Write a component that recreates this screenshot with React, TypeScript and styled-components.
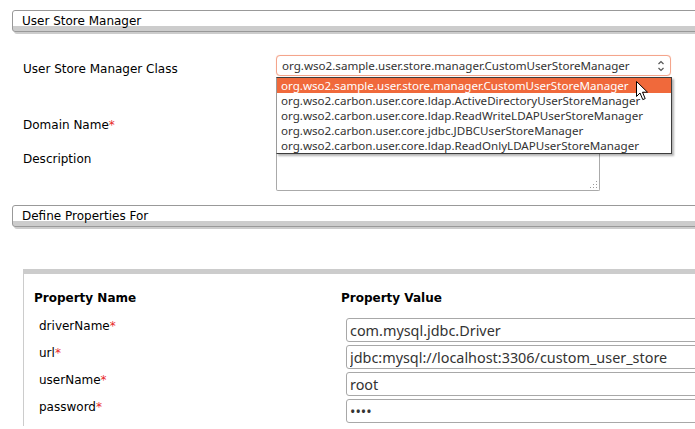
import React from "react";
import styled, { createGlobalStyle } from "styled-components";

const GlobalStyle = createGlobalStyle`
    html, body {
        margin: 0;
        padding: 0;
        background: #fff;
        overflow: hidden;
    }
    body {
        font-family: "DejaVu Sans", Verdana, sans-serif;
        font-size: 12px;
        color: #000;
    }
`;

const Page = styled.div`
    width: 695px;
    height: 429px;
    overflow: hidden;
    box-sizing: border-box;
    padding: 10px 0 0 12px;
`;

const SectionTitle = styled.h2<{ $top?: number }>`
    margin: ${(p) => p.$top || 0}px -20px 0 0;
    height: 22px;
    box-sizing: border-box;
    border: 1px solid #999;
    border-radius: 3px;
    background: linear-gradient(to bottom, #fff 0, #fff 15px, #ccc 15px, #ccc 100%);
    box-shadow: 2px 2px 0 #ccc;
    padding-left: 9px;
    font-size: 12px;
    font-weight: normal;
    line-height: 20px;
`;

const FormGrid = styled.div`
    margin-top: 23px;
    padding-left: 11px;
    display: flex;
    flex-direction: column;
`;

const FieldRow = styled.div<{ $gap?: number; $alignTop?: boolean }>`
    display: grid;
    grid-template-columns: 253px 1fr;
    align-items: ${(p) => (p.$alignTop ? "start" : "center")};
    margin-top: ${(p) => p.$gap || 0}px;
`;

const Label = styled.div<{ $pad?: number }>`
    line-height: 15px;
    padding-top: ${(p) => p.$pad || 0}px;
`;

const Req = styled.span`
    color: #e8282a;
`;

const SelectWrap = styled.div`
    position: relative;
    width: 395px;
`;

const SelectBox = styled.div`
    height: 21px;
    box-sizing: border-box;
    border: 1px solid #f4a58c;
    border-radius: 4px;
    box-shadow: 0 0 1px #f9c9b8;
    background: #fff;
    display: flex;
    align-items: center;
    justify-content: space-between;
    padding: 0 5px 0 5px;
    font-family: "Noto Sans", "DejaVu Sans", sans-serif;
    font-size: 11.6px;
    color: #333;
`;

const Popup = styled.ul`
    position: absolute;
    top: 22px;
    left: 0;
    width: 396px;
    box-sizing: border-box;
    margin: 0;
    padding: 0;
    list-style: none;
    background: #fff;
    border: 1px solid #3c3c3c;
    border-left-color: #9a9a9a;
    box-shadow: 2px 2px 2px rgba(0, 0, 0, 0.3);
    z-index: 2;
    font-family: "Noto Sans", "DejaVu Sans", sans-serif;
    font-size: 11.6px;
`;

const Option = styled.li<{ $active?: boolean }>`
    height: 15px;
    line-height: 15px;
    padding-left: 4px;
    white-space: nowrap;
    color: ${(p) => (p.$active ? "#fff" : "#333")};
    background: ${(p) => (p.$active ? "#f0693b" : "transparent")};
`;

const Pointer = styled.svg`
    position: absolute;
    left: 360px;
    top: 26px;
    z-index: 3;
`;

const TextInput = styled.input<{ $width?: number }>`
    width: ${(p) => p.$width || 324}px;
    height: 21px;
    box-sizing: border-box;
    border: 1px solid #a8a8a8;
    border-radius: 3px;
    padding: 0 3px;
    font-family: "Noto Sans", "DejaVu Sans", sans-serif;
    font-size: 14.4px;
    color: #333;
    background: #fff;
    outline: none;
`;

const AreaWrap = styled.div`
    position: relative;
    width: 324px;
    height: 39px;
`;

const TextArea = styled.textarea`
    width: 100%;
    height: 100%;
    box-sizing: border-box;
    border: 1px solid #aaa;
    border-top-color: #ccc;
    border-radius: 2px;
    resize: none;
    display: block;
    background: #fff;
`;

const Grip = styled.svg`
    position: absolute;
    right: 2px;
    bottom: 2px;
`;

const PropTable = styled.div`
    margin: 42px -20px 0 11px;
    border-top: 5px solid #ccc;
    border-left: 1px solid #ccc;
    padding: 17px 0 0 10px;
    display: grid;
    grid-template-columns: 307px 1fr;
    grid-auto-rows: 27px;
`;

const HeadCell = styled.div`
    font-weight: bold;
    line-height: 15px;
`;

const NameCell = styled.div`
    padding: 1px 0 0 5px;
    line-height: 15px;
`;

const ValueCell = styled.div`
    padding-left: 5px;
`;

const ValueInput = styled(TextInput)`
    width: 420px;
    height: 24px;
`;

const options = [
    "org.wso2.sample.user.store.manager.CustomUserStoreManager",
    "org.wso2.carbon.user.core.ldap.ActiveDirectoryUserStoreManager",
    "org.wso2.carbon.user.core.ldap.ReadWriteLDAPUserStoreManager",
    "org.wso2.carbon.user.core.jdbc.JDBCUserStoreManager",
    "org.wso2.carbon.user.core.ldap.ReadOnlyLDAPUserStoreManager",
];

const properties = [
    { name: "driverName", value: "com.mysql.jdbc.Driver" },
    { name: "url", value: "jdbc:mysql://localhost:3306/custom_user_store" },
    { name: "userName", value: "root" },
    { name: "password", value: "root", secret: true },
];

const App = (): JSX.Element => {
    return (
        <Page>
            <GlobalStyle />
            <SectionTitle>User Store Manager</SectionTitle>
            <FormGrid>
                <FieldRow $alignTop>
                    <Label $pad={7}>User Store Manager Class</Label>
                    <SelectWrap>
                        <SelectBox>
                            <span>{options[0]}</span>
                            <svg width="8" height="12" viewBox="0 0 8 12">
                                <path d="M1.5 4 L4 1.5 L6.5 4" fill="none" stroke="#555" strokeWidth="1.2" />
                                <path d="M1.5 8 L4 10.5 L6.5 8" fill="none" stroke="#555" strokeWidth="1.2" />
                            </svg>
                        </SelectBox>
                        <Popup>
                            {options.map((o, i) => (
                                <Option key={o} $active={i === 0}>{o}</Option>
                            ))}
                        </Popup>
                        <Pointer width="13" height="20" viewBox="0 0 13 20">
                            <path d="M0.5 0.5 L0.5 15.5 L4 12 L6.8 18.6 L9.2 17.6 L6.5 11.2 L11.5 11.2 Z" fill="#fff" stroke="#000" strokeWidth="1" strokeLinejoin="round" />
                        </Pointer>
                    </SelectWrap>
                </FieldRow>
                <FieldRow $gap={38}>
                    <Label>Domain Name<Req>*</Req></Label>
                    <TextInput readOnly value="" />
                </FieldRow>
                <FieldRow $gap={16} $alignTop>
                    <Label>Description</Label>
                    <AreaWrap>
                        <TextArea readOnly value="" />
                        <Grip width="9" height="9" viewBox="0 0 9 9">
                            {[[7, 1], [4, 4], [7, 4], [1, 7], [4, 7], [7, 7]].map(([x, y]) => (
                                <rect key={`${x}-${y}`} x={x} y={y} width="1" height="1" fill="#999" />
                            ))}
                        </Grip>
                    </AreaWrap>
                </FieldRow>
            </FormGrid>
            <SectionTitle $top={14}>Define Properties For</SectionTitle>
            <PropTable>
                <HeadCell>Property Name</HeadCell>
                <HeadCell>Property Value</HeadCell>
                {properties.map((p) => (
                    <React.Fragment key={p.name}>
                        <NameCell>{p.name}<Req>*</Req></NameCell>
                        <ValueCell>
                            <ValueInput readOnly type={p.secret ? "password" : "text"} value={p.value} />
                        </ValueCell>
                    </React.Fragment>
                ))}
            </PropTable>
        </Page>
    );
};

export default App;
